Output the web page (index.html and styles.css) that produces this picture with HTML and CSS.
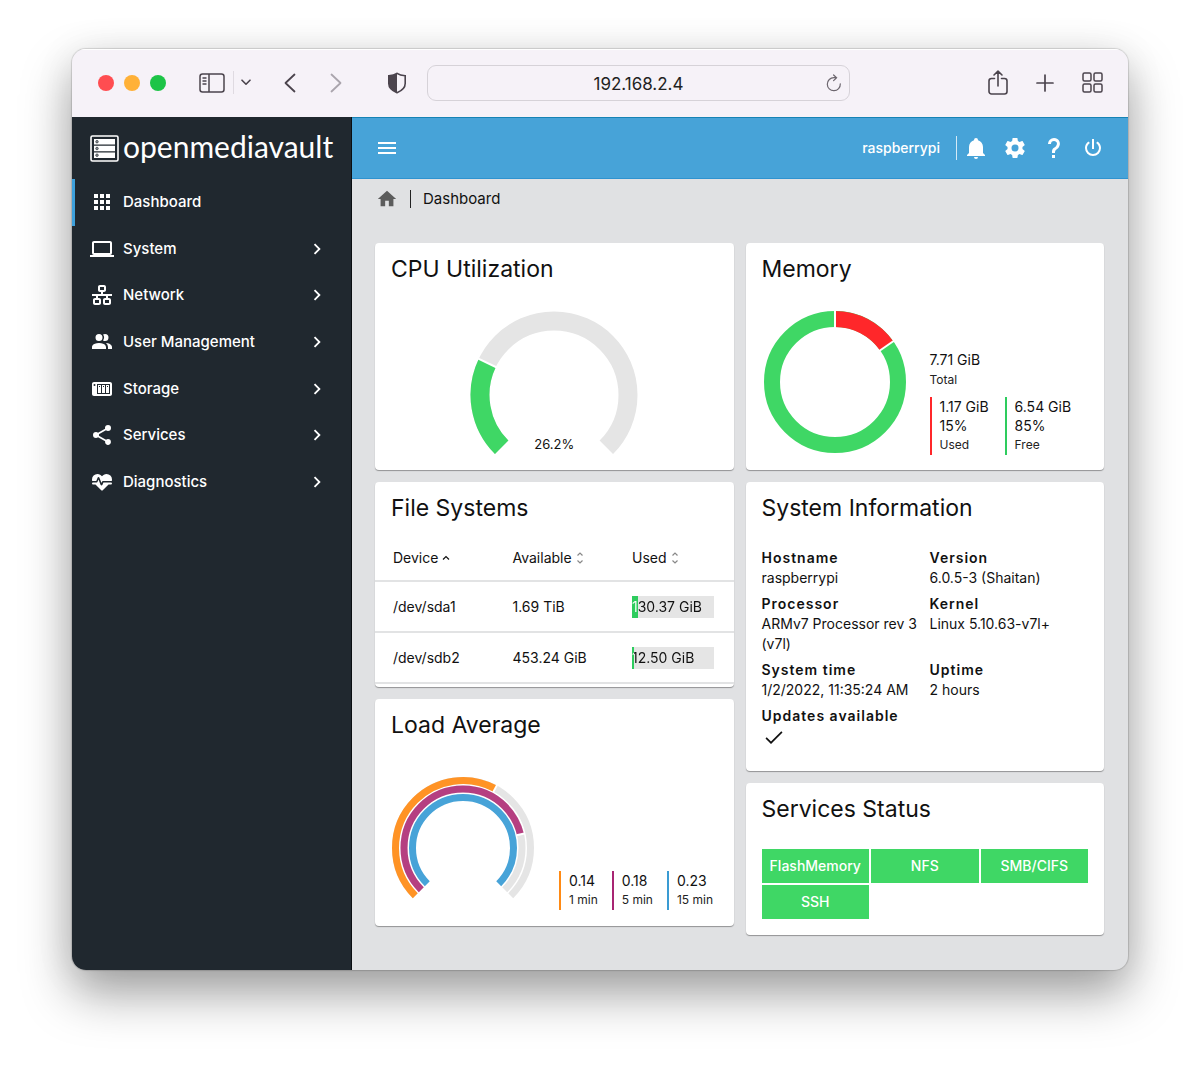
FILE: index.html
```html
<!DOCTYPE html>
<html lang="en">
<head>
<meta charset="utf-8">
<meta name="viewport" content="width=device-width, initial-scale=1">
<title>openmediavault - Dashboard</title>
<link rel="stylesheet" href="styles.css">
</head>
<body>
<div class="window">
  <div class="toolbar">
    <div class="lights">
      <button class="light light-close" aria-label="Close"></button>
      <button class="light light-min" aria-label="Minimize"></button>
      <button class="light light-max" aria-label="Zoom"></button>
    </div>
    <div class="toolbar-left">
      <button class="tool" aria-label="Sidebar"><svg width="26" height="20" viewBox="0 0 26 20" fill="none" stroke="currentColor" stroke-width="1.5"><rect x="1" y="1" width="24" height="18" rx="2.5"/><path d="M10 1v18M3.5 5h4M3.5 8h4M3.5 11h4"/></svg></button>
      <span class="tool-divider"></span>
      <button class="tool tool-tabs" aria-label="Tab groups"><svg width="10" height="7" viewBox="0 0 10 7" fill="none" stroke="currentColor" stroke-width="1.6" stroke-linecap="round" stroke-linejoin="round"><path d="M1 1.2l4 4 4-4"/></svg></button>
      <button class="tool tool-back" aria-label="Back"><svg width="12" height="20" viewBox="0 0 12 20" fill="none" stroke="currentColor" stroke-width="1.8" stroke-linecap="round" stroke-linejoin="round"><path d="M10.500 1.500L1.500 10l9 8.500"/></svg></button>
      <button class="tool tool-forward" aria-label="Forward"><svg width="12" height="20" viewBox="0 0 12 20" fill="none" stroke="currentColor" stroke-width="1.800" stroke-linecap="round" stroke-linejoin="round"><path d="M1.500 1.500l9 8.500-9 8.500"/></svg></button>
      <button class="tool tool-shield" aria-label="Privacy report"><svg width="20" height="22" viewBox="0 0 20 22"><path d="M10 1.300C7.500 3 5 3.500 1.800 3.700v7.800c0 4.500 4 7.500 8.200 9.200 4.200-1.700 8.200-4.700 8.200-9.200V3.700C15 3.500 12.500 3 10 1.300z" fill="none" stroke="currentColor" stroke-width="1.600"/><path d="M10 1.300C7.500 3 5 3.500 1.800 3.700v7.800c0 4.500 4 7.500 8.200 9.200z" fill="currentColor"/></svg></button>
    </div>
    <div class="address">
      <input class="address-input" type="text" value="192.168.2.4" aria-label="Address">
      <button class="reload" aria-label="Reload"><svg width="16" height="18" viewBox="0 0 16 18" fill="none" stroke="currentColor" stroke-width="1.200" stroke-linecap="round"><path d="M14.300 9.800A6.500 6.500 0 1 1 8 3.700h2.500M7.600 1l3 2.700-3 2.900"/></svg></button>
    </div>
    <div class="toolbar-right">
      <button class="tool" aria-label="Share"><svg width="20" height="26" viewBox="0 0 20 26" fill="none" stroke="currentColor" stroke-width="1.600" stroke-linecap="round" stroke-linejoin="round"><path d="M6.500 8.500H3.500a2.500 2.500 0 0 0-2.500 2.500v10.500A2.500 2.500 0 0 0 3.500 24h13a2.500 2.500 0 0 0 2.500-2.500V11a2.500 2.500 0 0 0-2.500-2.500h-3M10 16V1.500M6 5l4-3.800L14 5"/></svg></button>
      <button class="tool" aria-label="New tab"><svg width="18" height="18" viewBox="0 0 18 18" fill="none" stroke="currentColor" stroke-width="1.700" stroke-linecap="round"><path d="M9 1v16M1 9h16"/></svg></button>
      <button class="tool" aria-label="Tab overview"><svg width="21" height="21" viewBox="0 0 21 21" fill="none" stroke="currentColor" stroke-width="1.500"><rect x="1" y="1" width="8" height="8" rx="1.500"/><rect x="12" y="1" width="8" height="8" rx="1.500"/><rect x="1" y="12" width="8" height="8" rx="1.500"/><rect x="12" y="12" width="8" height="8" rx="1.500"/></svg></button>
    </div>
  </div>

  <div class="app">
    <aside class="sidebar">
      <a class="brand" href="#">
        <svg width="29" height="27" viewBox="0 0 29 27"><rect x="1" y="1" width="27" height="25" rx="1.500" fill="none" stroke="#fff" stroke-width="1.600"/><g fill="#fff"><path d="M4 4h21v5.500H4zM4 10.800h21v5.400H4zM4 17.500h21V23H4z"/></g><g fill="#8b9094" stroke="#20282f" stroke-width=".6"><circle cx="7" cy="6.700" r="1.300"/><circle cx="7" cy="13.500" r="1.300"/><circle cx="7" cy="20.200" r="1.300"/></g></svg>
        <span class="brand-name">openmediavault</span>
      </a>
      <nav class="nav">
        <a class="nav-item nav-active" href="#"><svg class="icon" viewBox="0 0 24 24"><path d="M16,20H20V16H16M16,14H20V10H16M10,8H14V4H10M16,8H20V4H16M10,14H14V10H10M4,14H8V10H4M4,20H8V16H4M10,20H14V16H10M4,8H8V4H4V8Z"/></svg><span>Dashboard</span></a>
        <a class="nav-item" href="#"><svg class="icon" viewBox="0 0 24 24"><path d="M4,6H20V16H4M20,18A2,2 0 0,0 22,16V6C22,4.890 21.100,4 20,4H4C2.890,4 2,4.890 2,6V16A2,2 0 0,0 4,18H0V20H24V18H20Z"/></svg><span>System</span><svg class="icon chevron" viewBox="0 0 24 24"><path d="M8.590,16.580L13.170,12L8.590,7.410L10,6L16,12L10,18L8.590,16.580Z"/></svg></a>
        <a class="nav-item" href="#"><svg class="icon" viewBox="0 0 24 24"><path d="M10,2C8.890,2 8,2.890 8,4V7C8,8.110 8.890,9 10,9H11V11H2V13H6V15H5C3.890,15 3,15.890 3,17V20C3,21.110 3.890,22 5,22H9C10.110,22 11,21.110 11,20V17C11,15.890 10.110,15 9,15H8V13H16V15H15C13.890,15 13,15.890 13,17V20C13,21.110 13.890,22 15,22H19C20.110,22 21,21.110 21,20V17C21,15.890 20.110,15 19,15H18V13H22V11H13V9H14C15.110,9 16,8.110 16,7V4C16,2.890 15.110,2 14,2H10M10,4H14V7H10V4M5,17H9V20H5V17M15,17H19V20H15V17Z"/></svg><span>Network</span><svg class="icon chevron" viewBox="0 0 24 24"><path d="M8.590,16.580L13.170,12L8.590,7.410L10,6L16,12L10,18L8.590,16.580Z"/></svg></a>
        <a class="nav-item" href="#"><svg class="icon" viewBox="0 0 24 24"><path d="M16 17V19H2V17S2 13 9 13 16 17 16 17M12.500 7.500A3.500 3.500 0 1 0 9 11A3.500 3.500 0 0 0 12.500 7.500M15.940 13A5.320 5.320 0 0 1 18 17V19H22V17S22 13.370 15.940 13M15 4A3.390 3.390 0 0 0 13.070 4.590A5 5 0 0 1 13.070 10.410A3.390 3.390 0 0 0 15 11A3.500 3.500 0 0 0 15 4Z"/></svg><span>User Management</span><svg class="icon chevron" viewBox="0 0 24 24"><path d="M8.590,16.580L13.170,12L8.590,7.410L10,6L16,12L10,18L8.590,16.580Z"/></svg></a>
        <a class="nav-item" href="#"><svg class="icon" viewBox="0 0 24 24"><path d="M4,5C2.890,5 2,5.890 2,7V17C2,18.110 2.890,19 4,19H20C21.110,19 22,18.110 22,17V7C22,5.890 21.110,5 20,5H4M4.500,7A1,1 0 0,1 5.500,8A1,1 0 0,1 4.500,9A1,1 0 0,1 3.500,8A1,1 0 0,1 4.500,7M7,7H20V17H7V7M8,8V16H11V8H8M12,8V16H15V8H12M16,8V16H19V8H16M9,9H10V10H9V9M13,9H14V10H13V9M17,9H18V10H17V9Z"/></svg><span>Storage</span><svg class="icon chevron" viewBox="0 0 24 24"><path d="M8.590,16.580L13.170,12L8.590,7.410L10,6L16,12L10,18L8.590,16.580Z"/></svg></a>
        <a class="nav-item" href="#"><svg class="icon" viewBox="0 0 24 24"><path d="M18,16.080C17.240,16.080 16.560,16.380 16.040,16.850L8.910,12.700C8.960,12.470 9,12.240 9,12C9,11.760 8.960,11.530 8.910,11.300L15.960,7.190C16.500,7.690 17.210,8 18,8A3,3 0 0,0 21,5A3,3 0 0,0 18,2A3,3 0 0,0 15,5C15,5.240 15.040,5.470 15.090,5.700L8.040,9.810C7.500,9.310 6.790,9 6,9A3,3 0 0,0 3,12A3,3 0 0,0 6,15C6.790,15 7.500,14.690 8.040,14.190L15.160,18.340C15.110,18.550 15.080,18.770 15.080,19C15.080,20.610 16.390,21.910 18,21.910C19.610,21.910 20.920,20.610 20.920,19A2.920,2.920 0 0,0 18,16.080Z"/></svg><span>Services</span><svg class="icon chevron" viewBox="0 0 24 24"><path d="M8.590,16.580L13.170,12L8.590,7.410L10,6L16,12L10,18L8.590,16.580Z"/></svg></a>
        <a class="nav-item" href="#"><svg class="icon" viewBox="0 0 24 24"><path d="M7.500,4A5.500,5.500 0 0,0 2,9.500C2,10 2.090,10.500 2.220,11H6.300L7.570,7.630C7.870,6.830 9.050,6.750 9.430,7.630L11.500,13L12.090,11.580C12.220,11.250 12.570,11 13,11H21.780C21.910,10.500 22,10 22,9.500A5.500,5.500 0 0,0 16.500,4C14.640,4 13,4.930 12,6.340C11,4.930 9.360,4 7.500,4M3,12.500A1,1 0 0,0 2,13.500A1,1 0 0,0 3,14.500H5.440L11,20C12,20.900 12,20.900 13,20L18.560,14.500H21A1,1 0 0,0 22,13.500A1,1 0 0,0 21,12.500H13.400L12.470,14.800C12.070,15.810 10.920,15.670 10.550,14.830L8.500,9.500L7.540,11.830C7.390,12.210 7.050,12.500 6.600,12.500H3Z"/></svg><span>Diagnostics</span><svg class="icon chevron" viewBox="0 0 24 24"><path d="M8.590,16.580L13.170,12L8.590,7.410L10,6L16,12L10,18L8.590,16.580Z"/></svg></a>
      </nav>
    </aside>

    <div class="content">
      <header class="header">
        <button class="header-button" aria-label="Menu"><svg class="icon" viewBox="0 0 24 24"><path d="M3,6H21V8H3V6M3,11H21V13H3V11M3,16H21V18H3V16Z"/></svg></button>
        <span class="hostname">raspberrypi</span>
        <div class="header-actions">
          <button class="header-button" aria-label="Notifications"><svg class="icon" viewBox="0 0 24 24"><path d="M21,19V20H3V19L5,17V11C5,7.900 7.030,5.170 10,4.290C10,4.190 10,4.100 10,4A2,2 0 0,1 12,2A2,2 0 0,1 14,4C14,4.100 14,4.190 14,4.290C16.970,5.170 19,7.900 19,11V17L21,19M14,21A2,2 0 0,1 12,23A2,2 0 0,1 10,21"/></svg></button>
          <button class="header-button" aria-label="Settings"><svg class="icon" viewBox="0 0 24 24"><path d="M12,15.500A3.500,3.500 0 0,1 8.500,12A3.500,3.500 0 0,1 12,8.500A3.500,3.500 0 0,1 15.500,12A3.500,3.500 0 0,1 12,15.500M19.430,12.970C19.470,12.650 19.500,12.330 19.500,12C19.500,11.670 19.470,11.340 19.430,11L21.540,9.370C21.730,9.220 21.780,8.950 21.660,8.730L19.660,5.270C19.540,5.050 19.270,4.960 19.050,5.050L16.560,6.050C16.040,5.660 15.500,5.320 14.870,5.070L14.500,2.420C14.460,2.180 14.250,2 14,2H10C9.750,2 9.540,2.180 9.500,2.420L9.130,5.070C8.500,5.320 7.960,5.660 7.440,6.050L4.950,5.050C4.730,4.960 4.460,5.050 4.340,5.270L2.340,8.730C2.210,8.950 2.270,9.220 2.460,9.370L4.570,11C4.530,11.340 4.500,11.670 4.500,12C4.500,12.330 4.530,12.650 4.570,12.970L2.460,14.630C2.270,14.780 2.210,15.050 2.340,15.270L4.340,18.730C4.460,18.950 4.730,19.030 4.950,18.950L7.440,17.940C7.960,18.340 8.500,18.680 9.130,18.930L9.500,21.580C9.540,21.820 9.750,22 10,22H14C14.250,22 14.460,21.820 14.500,21.580L14.870,18.930C15.500,18.670 16.040,18.340 16.560,17.940L19.050,18.950C19.270,19.030 19.540,18.950 19.660,18.730L21.660,15.270C21.780,15.050 21.730,14.780 21.540,14.630L19.430,12.970Z"/></svg></button>
          <button class="header-button" aria-label="Help"><svg class="icon" viewBox="0 0 24 24"><path d="M10,19H13V22H10V19M12,2C17.350,2.220 19.680,7.620 16.500,11.670C15.670,12.670 14.330,13.330 13.670,14.170C13,15 13,16 13,17H10C10,15.330 10,13.920 10.670,12.920C11.330,11.920 12.670,11.330 13.500,10.670C15.920,8.430 15.320,5.260 12,5A3,3 0 0,0 9,8H6A6,6 0 0,1 12,2Z"/></svg></button>
          <button class="header-button" aria-label="Power"><svg class="icon" viewBox="0 0 24 24"><path d="M16.560,5.440L15.110,6.890C16.840,7.940 18,9.830 18,12A6,6 0 0,1 12,18A6,6 0 0,1 6,12C6,9.830 7.160,7.940 8.880,6.880L7.440,5.440C5.360,6.880 4,9.280 4,12A8,8 0 0,0 12,20A8,8 0 0,0 20,12C20,9.280 18.640,6.880 16.560,5.440M13,3H11V13H13"/></svg></button>
        </div>
      </header>

      <nav class="breadcrumb" aria-label="Breadcrumb">
        <a class="home" href="#" aria-label="Home"><svg class="icon" viewBox="0 0 24 24"><path d="M10,20V14H14V20H19V12H22L12,3L2,12H5V20H10Z"/></svg></a>
        <span class="crumb">Dashboard</span>
      </nav>

      <main class="board">
        <div class="column">
          <section class="card">
            <h2 class="card-title">CPU Utilization</h2>
            <div class="gauge">
              <svg width="168" height="143" viewBox="-84 -84 168 143">
                <g fill="none" stroke-width="19"><circle r="74" pathLength="360" stroke="#e5e5e5" stroke-dasharray="270 90" transform="rotate(135)"/><circle r="74" pathLength="360" stroke="#3fd765" stroke-dasharray="70.700 289.300" transform="rotate(135)"/></g>
                <path d="M60 0h28" transform="rotate(205.700)" stroke="#fff" stroke-width="2"/>
              </svg>
              <span class="gauge-value">26.2%</span>
            </div>
          </section>

          <section class="card">
            <h2 class="card-title">File Systems</h2>
            <table class="files">
              <thead>
                <tr>
                  <th scope="col">Device<svg class="sort" width="8" height="12" viewBox="0 0 8 12"><path d="M1 7.500l3-3 3 3" stroke="#111"/></svg></th>
                  <th scope="col">Available<svg class="sort" width="8" height="12" viewBox="0 0 8 12"><path d="M1.500 3.500L4 1l2.500 2.500M1.500 8.500L4 11l2.500-2.500" stroke="#888"/></svg></th>
                  <th scope="col">Used<svg class="sort" width="8" height="12" viewBox="0 0 8 12"><path d="M1.500 3.500L4 1l2.500 2.500M1.500 8.500L4 11l2.500-2.500" stroke="#888"/></svg></th>
                </tr>
              </thead>
              <tbody>
                <tr><td>/dev/sda1</td><td>1.69 TiB</td><td><div class="usage" style="--fill:7.2%"><span>130.37 GiB</span></div></td></tr>
                <tr><td>/dev/sdb2</td><td>453.24 GiB</td><td><div class="usage" style="--fill:2.7%"><span>12.50 GiB</span></div></td></tr>
              </tbody>
            </table>
          </section>

          <section class="card">
            <h2 class="card-title">Load Average</h2>
            <div class="chart chart-load">
              <svg width="144" height="134" viewBox="-72 -72 144 134">
                <g fill="none" stroke-width="7"><g stroke="#e5e5e5" transform="rotate(135)" stroke-dasharray="270 90"><circle r="67.500" pathLength="360"/><circle r="59" pathLength="360"/></g>
                <circle r="67.500" pathLength="360" stroke="#ff9325" stroke-dasharray="163.400 196.600" transform="rotate(135)"/>
                <circle r="59" pathLength="360" stroke="#b53f81" stroke-dasharray="211.700 148.300" transform="rotate(135)"/>
                <circle r="50.500" pathLength="360" stroke="#47a3d8" stroke-dasharray="270 90" transform="rotate(135)"/></g>
                <g stroke="#fff" stroke-width="2"><path d="M63.500 0h8" transform="rotate(298.400)"/><path d="M55 0h8" transform="rotate(346.700)"/></g>
              </svg>
              <dl class="legend">
                <div class="legend-item orange"><dd>0.14</dd><dt>1 min</dt></div>
                <div class="legend-item purple"><dd>0.18</dd><dt>5 min</dt></div>
                <div class="legend-item blue"><dd>0.23</dd><dt>15 min</dt></div>
              </dl>
            </div>
          </section>
        </div>

        <div class="column">
          <section class="card">
            <h2 class="card-title">Memory</h2>
            <div class="chart">
              <svg width="146" height="146" viewBox="-73 -73 146 146">
                <g fill="none" stroke-width="16"><circle r="63" stroke="#3fd765"/><circle r="63" pathLength="360" stroke="#ff272a" stroke-dasharray="55 305" transform="rotate(-90)"/></g>
                <g stroke="#fff" stroke-width="2"><path d="M0-54v-18"/><path d="M0-54v-18" transform="rotate(55)"/></g>
              </svg>
              <div class="memory-text">
                <dl class="total"><dd>7.71 GiB</dd><dt>Total</dt></dl>
                <dl class="legend">
                  <div class="legend-item red"><dd>1.17 GiB</dd><dd>15%</dd><dt>Used</dt></div>
                  <div class="legend-item green"><dd>6.54 GiB</dd><dd>85%</dd><dt>Free</dt></div>
                </dl>
              </div>
            </div>
          </section>

          <section class="card">
            <h2 class="card-title">System Information</h2>
            <dl class="info">
              <div><dt>Hostname</dt><dd>raspberrypi</dd></div>
              <div><dt>Version</dt><dd>6.0.5-3 (Shaitan)</dd></div>
              <div><dt>Processor</dt><dd>ARMv7 Processor rev 3 (v7l)</dd></div>
              <div><dt>Kernel</dt><dd>Linux 5.10.63-v7l+</dd></div>
              <div><dt>System time</dt><dd>1/2/2022, 11:35:24 AM</dd></div>
              <div><dt>Uptime</dt><dd>2 hours</dd></div>
              <div><dt>Updates available</dt><dd><svg class="icon" viewBox="0 0 24 24" role="img" aria-label="Yes"><path d="M20.500,6.500L9,18L3.500,12.500L4.700,11.300L9,15.600L19.300,5.300Z"/></svg></dd></div>
            </dl>
          </section>

          <section class="card">
            <h2 class="card-title">Services Status</h2>
            <ul class="services">
              <li>FlashMemory</li>
              <li>NFS</li>
              <li>SMB/CIFS</li>
              <li>SSH</li>
            </ul>
          </section>
        </div>
      </main>
    </div>
  </div>
</div>
</body>
</html>
```
FILE: styles.css
```css
* { box-sizing: border-box; }

body {
  margin: 0;
  padding: 49px 72px 96px;
  background: #fff;
  color: #111;
  font: 15px/20px Inter, "Liberation Sans", sans-serif;
}

h2, dl, dd, ul { margin: 0; padding: 0; }
ul { list-style: none; }
a { color: inherit; text-decoration: none; }
svg { display: block; flex: none; }

button {
  padding: 0;
  border: 0;
  background: none;
  color: inherit;
  font: inherit;
}

.icon { width: 24px; height: 24px; fill: currentColor; }

.window {
  overflow: hidden;
  border-radius: 14px;
  background: #e0e1e3;
  box-shadow: 0 0 1px 1px rgba(0, 0, 0, .14), 0 24px 50px rgba(0, 0, 0, .36), 0 4px 40px rgba(0, 0, 0, .08);
}

/* Browser toolbar */
.toolbar {
  display: flex;
  align-items: center;
  height: 68px;
  padding: 0 25px 2px 26px;
  border-top: 1px solid #fff;
  background: #f6f2f8;
  color: #4b444d;
}

.lights { display: flex; gap: 10px; }
.light { width: 16px; height: 16px; border-radius: 50%; }
.light-close { background: #ff4d51; }
.light-min { background: #ffb138; }
.light-max { background: #1dc447; }

.toolbar-left { display: flex; align-items: center; margin: 0 20px 0 33px; }
.tool-divider { width: 1px; height: 23px; margin: 0 7px 0 8px; background: #dfdae1; }
.tool-back { margin-left: 33px; }
.tool-forward { margin-left: 34px; color: #aaa5ad; }
.tool-shield { margin-left: 45px; }

.address { position: relative; flex: 1; }

.address-input {
  display: block;
  width: 100%;
  height: 36px;
  padding: 2px 32px 0;
  border: 1px solid #d6d2d8;
  border-radius: 9px;
  background: transparent;
  color: #222;
  font: 17px/20px Inter, "Liberation Sans", sans-serif;
  text-align: center;
}

.reload { position: absolute; top: 9px; right: 8px; color: #6d676f; }
.toolbar-right { display: flex; align-items: center; gap: 28px; margin-left: 138px; }

/* Application */
.app {
  display: grid;
  grid-template-columns: 280px minmax(0, 1fr);
}

.sidebar {
  border-right: 1px solid #0a0e11;
  background: #20282f;
  color: #fff;
  font-weight: 500;
}

.brand { display: flex; align-items: center; gap: 4px; height: 62px; padding-left: 18px; }
.brand-name { padding-bottom: 4px; font: 400 30px/36px Lato, "Open Sans", sans-serif; }

.nav { display: grid; grid-auto-rows: 1fr; height: 326px; }

.nav-item {
  display: flex;
  align-items: center;
  gap: 9px;
  padding: 0 23px 0 15px;
  border-left: 3px solid transparent;
}

.nav-active { border-color: #3ea1dc; }
.chevron { width: 22px; height: 22px; margin-left: auto; }

.header {
  display: flex;
  align-items: center;
  height: 62px;
  padding: 0 23px;
  border-top: 1px solid #1683b5;
  border-bottom: 1px solid #2f93d0;
  background: #47a3d8;
  color: #fff;
}

.hostname { margin-left: auto; padding-right: 16px; font-size: 14px; font-weight: 500; }

.header-actions {
  display: flex;
  align-items: center;
  gap: 15px;
  padding-left: 7px;
  border-left: 1px solid #d4eaf6;
}

.breadcrumb { display: flex; align-items: center; height: 40px; padding: 0 23px; }
.home { padding-right: 11px; color: #5c5c5c; }
.home .icon { width: 24px; height: 22px; }
.crumb { padding-left: 12px; border-left: 1px solid #222; line-height: 18px; }

.board {
  display: grid;
  grid-template-columns: repeat(2, minmax(0, 1fr));
  align-items: start;
  gap: 12px;
  padding: 24px 24px 35px 23px;
  font-size: 14px;
}

.column { display: grid; gap: 12px; }

.card {
  overflow: hidden;
  border-radius: 4px;
  background: #fff;
  box-shadow: 0 1px 1px rgba(0, 0, 0, .35);
}

.card-title { padding: 10px 16px 9px; font-size: 23px; font-weight: 400; line-height: 32px; }

.gauge { display: grid; justify-items: center; align-items: end; padding: 17px 0 16px; }
.gauge > * { grid-area: 1 / 1; }
.gauge-value { line-height: 20px; font-size: 13px; }

/* File systems */
.files { width: 100%; margin-bottom: 3px; border-collapse: collapse; table-layout: fixed; }
.files th { height: 48px; padding: 2px 0 0 18px; font-weight: 400; text-align: left; }
.files td { height: 51px; padding: 0 0 0 18px; }
.files tr { border-bottom: 2px solid #e2e3e4; }
.sort { display: inline-block; margin-left: 4px; fill: none; stroke-width: 1.2; vertical-align: -1px; }

.usage {
  width: 82px;
  background: linear-gradient(to right, #2ecc5e var(--fill), #e5e5e5 var(--fill));
  line-height: 22px;
}

.usage span {
  display: block;
  background: linear-gradient(to right, #fff var(--fill), #111 var(--fill));
  background-clip: text;
  -webkit-background-clip: text;
  color: transparent;
}

/* Charts with a legend */
.chart { display: flex; align-items: flex-end; gap: 22px; padding: 15px 16px; }
.chart-load { gap: 24px; padding: 26px 16px 16px; }
.legend { display: flex; gap: 16px; }
.chart-load .legend { gap: 14px; }
.legend-item { padding-left: 8px; border-left: 2px solid; line-height: 19px; }
.legend dd, .total dd { color: #111; }
.legend dt, .total dt { color: #222; font-size: 12px; line-height: 20px; }
.legend .red { border-color: #ff272a; }
.legend .green { border-color: #2ecc5e; }
.legend .orange { border-color: #ff8a14; }
.legend .purple { border-color: #a82573; }
.legend .blue { border-color: #3a9bd3; }
.total { margin-bottom: 7px; }

.info {
  display: grid;
  grid-template-columns: 168px minmax(0, 1fr);
  row-gap: 6px;
  padding: 15px 0 21px 16px;
}

.info dt { font-weight: 600; letter-spacing: 1px; }

.services {
  display: grid;
  grid-template-columns: repeat(3, minmax(0, 1fr));
  gap: 2px;
  padding: 15px 16px 16px;
}

.services li {
  background: #3fd765;
  color: #fff;
  font-weight: 500;
  line-height: 34px;
  text-align: center;
}
```
